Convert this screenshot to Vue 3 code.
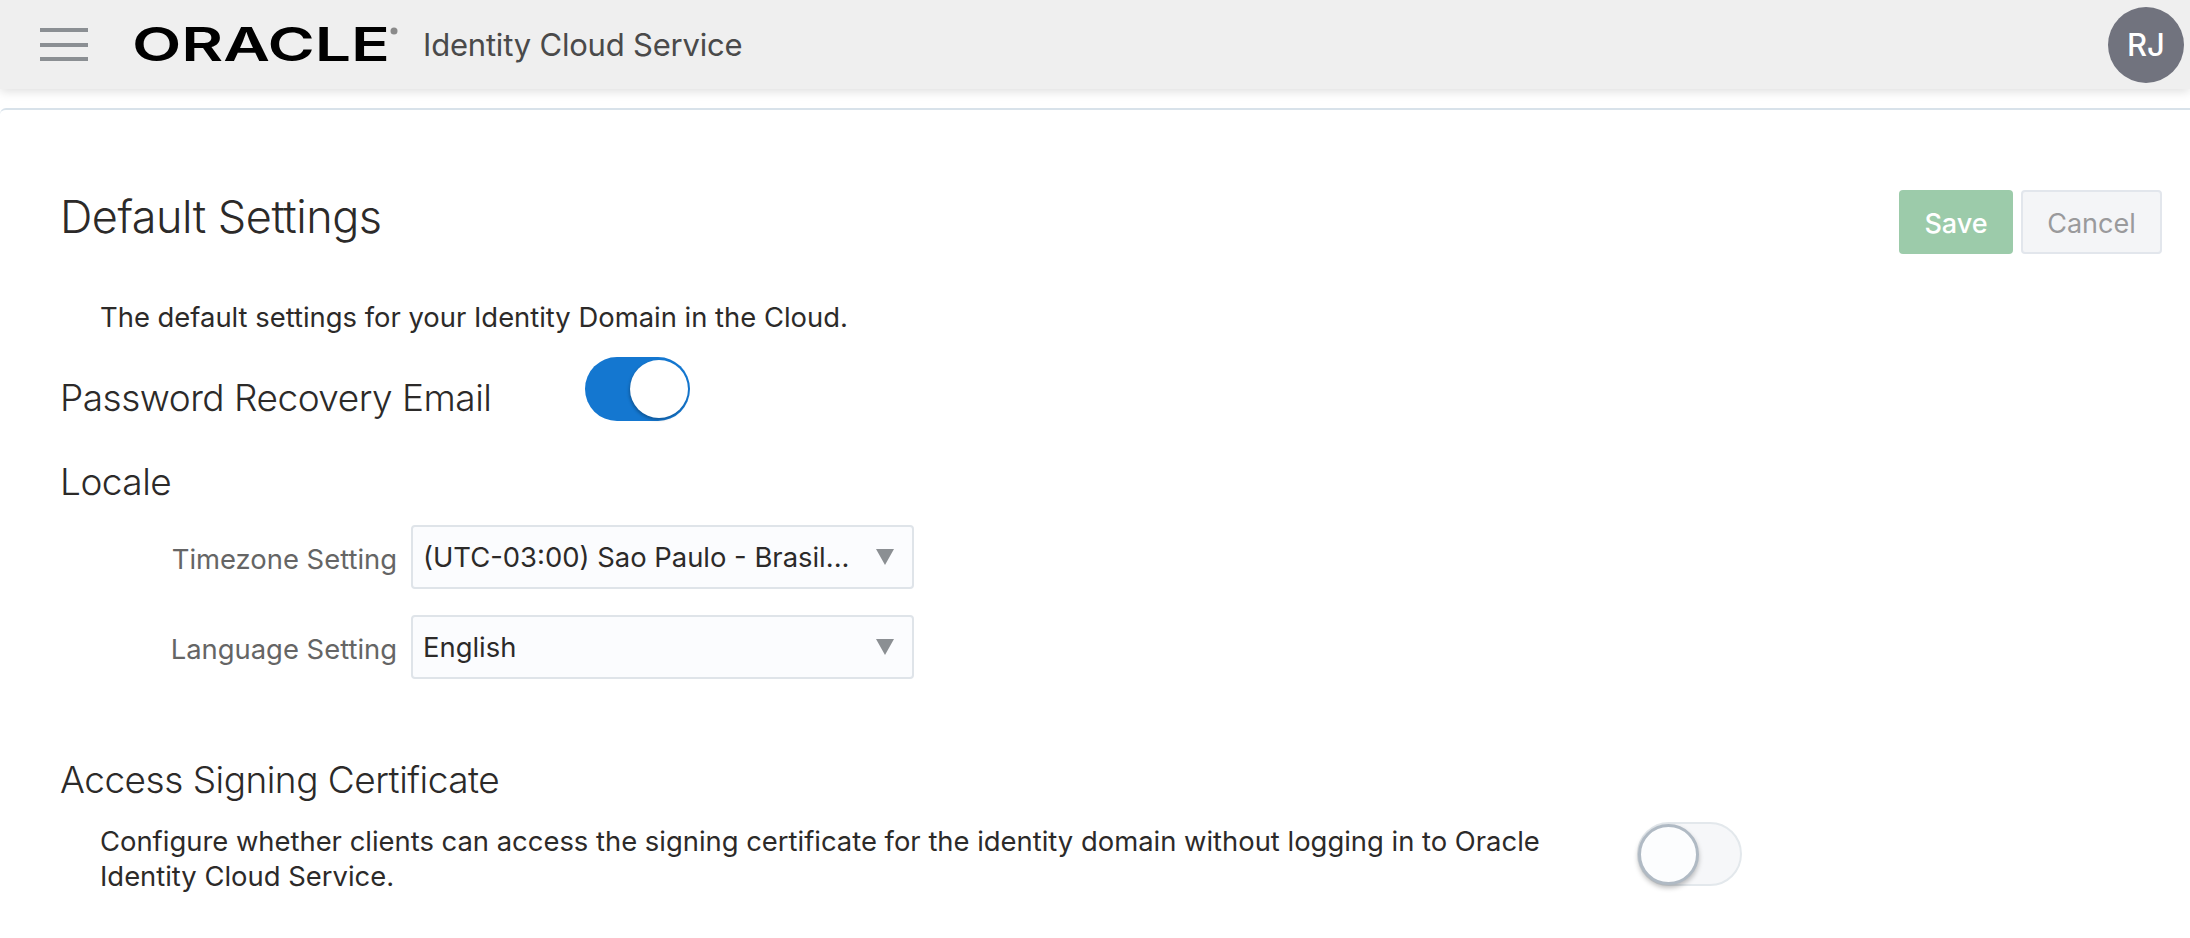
<script setup>
const localeRows = [
  { label: 'Timezone Setting', value: '(UTC-03:00) Sao Paulo - Brasil...' },
  { label: 'Language Setting', value: 'English' }
];
</script>

<template>
  <div class="page">
    <header class="topbar">
      <button class="menu-btn" aria-label="Menu">
        <span></span><span></span><span></span>
      </button>
      <svg class="logo" viewBox="0 0 266 60" width="266" height="60">
        <text x="0" y="47" textLength="258" lengthAdjust="spacingAndGlyphs" class="logo-text">ORACLE</text>
        <circle cx="262" cy="17" r="3.5" fill="#8a8a8a" />
      </svg>
      <span class="product">Identity Cloud Service</span>
      <div class="avatar">RJ</div>
    </header>

    <main class="card">
      <div class="title-row">
        <h1>Default Settings</h1>
        <div class="actions">
          <button class="btn save">Save</button>
          <button class="btn cancel">Cancel</button>
        </div>
      </div>

      <p class="intro">The default settings for your Identity Domain in the Cloud.</p>

      <div class="recovery-row">
        <h2>Password Recovery Email</h2>
        <div class="switch on"><span class="knob"></span></div>
      </div>

      <h2 class="locale-title">Locale</h2>
      <div class="locale-form">
        <div v-for="row in localeRows" :key="row.label" class="form-row">
          <label>{{ row.label }}</label>
          <div class="select">
            <span>{{ row.value }}</span>
            <i class="caret"></i>
          </div>
        </div>
      </div>

      <h2 class="cert-title">Access Signing Certificate</h2>
      <div class="cert-row">
        <p>Configure whether clients can access the signing certificate for the identity domain without logging in to Oracle Identity Cloud Service.</p>
        <div class="switch off"><span class="knob"></span></div>
      </div>
    </main>
  </div>
</template>

<style>
html, body { margin: 0; background: #fff; overflow: hidden; }
</style>

<style scoped>
.page {
  width: 2190px;
  height: 938px;
  overflow: hidden;
  font-family: Inter, "Liberation Sans", sans-serif;
  color: #2c2a29;
  background: #fff;
}

.topbar {
  height: 89px;
  background: #efefef;
  box-shadow: 0 2px 10px rgba(0, 0, 0, 0.14);
  display: flex;
  align-items: center;
  padding: 0 6px 0 40px;
  position: relative;
}
.menu-btn {
  width: 48px;
  height: 33px;
  padding: 0;
  border: 0;
  background: none;
  display: flex;
  flex-direction: column;
  justify-content: space-between;
}
.menu-btn span { display: block; height: 4px; background: #8b8f93; }
.logo { margin-left: 44px; margin-top: -1px; }
.logo-text {
  font-family: Inter, sans-serif;
  font-size: 46px;
  font-weight: 600;
  fill: #000;
}
.product {
  margin-left: 25px;
  font-size: 31px;
  color: #4a4a4a;
  letter-spacing: -0.2px;
}
.avatar {
  margin-left: auto;
  width: 76px;
  height: 76px;
  border-radius: 50%;
  background: #71737e;
  color: #fff;
  font-size: 31px;
  font-weight: 500;
  display: flex;
  align-items: center;
  justify-content: center;
}

.card {
  margin-top: 19px;
  border-top: 2px solid #d8e2ea;
  border-top-left-radius: 6px;
  padding: 80px 28px 0 60px;
}

.title-row {
  display: flex;
  justify-content: space-between;
  align-items: flex-start;
  height: 110px;
}
h1 {
  margin: 0;
  font-size: 45px;
  font-weight: 300;
  line-height: 54px;
  letter-spacing: -0.5px;
}
.actions { display: flex; gap: 8px; }
.btn {
  height: 64px;
  border-radius: 4px;
  font: 500 27px Inter, sans-serif;
  padding: 0;
  padding-top: 2px;
}
.save { width: 114px; background: #9ccbaa; color: #fff; border: 0; }
.cancel { width: 141px; background: #f4f5f7; color: #9a9a9c; border: 2px solid #e2e6ec; font-weight: 400; }

.intro {
  margin: 0 0 0 40px;
  font-size: 27.4px;
  line-height: 34px;
}

h2 {
  margin: 0;
  font-size: 37px;
  font-weight: 300;
  line-height: 44px;
  letter-spacing: -0.5px;
}
.recovery-row {
  display: flex;
  align-items: center;
  margin-top: 22px;
  height: 64px;
}
.recovery-row h2 { width: 525px; padding-top: 20px; }

.switch {
  width: 105px;
  height: 64px;
  border-radius: 32px;
  box-sizing: border-box;
  display: flex;
  align-items: center;
  flex: none;
}
.switch .knob {
  display: block;
  width: 58px;
  height: 58px;
  border-radius: 50%;
  box-sizing: border-box;
  background: #fff;
}
.switch.on { background: #1477d0; justify-content: flex-end; padding-right: 2px; margin-top: 1px; }
.switch.on .knob { box-shadow: -1px 2px 3px rgba(0, 0, 0, 0.25); }
.switch.off { background: #f6f7f9; border: 2px solid #e3e8ec; }
.switch.off .knob {
  width: 61px;
  height: 61px;
  margin-left: -1px;
  background: #fcfdfe;
  border: 3px solid #b0bac4;
  box-shadow: 0 3px 5px rgba(0, 0, 0, 0.25);
}

.locale-title { margin-top: 40px; }
.locale-form {
  margin-top: 21px;
  display: flex;
  flex-direction: column;
  gap: 26px;
}
.form-row { display: flex; align-items: center; gap: 14px; }
.form-row label {
  width: 337px;
  text-align: right;
  font-size: 27.4px;
  color: #656565;
  padding-top: 3px;
}
.select {
  width: 503px;
  height: 64px;
  box-sizing: border-box;
  border: 2px solid #dfe4e9;
  border-radius: 4px;
  background: #fbfcfe;
  display: flex;
  align-items: center;
  justify-content: space-between;
  padding: 0 18px 0 10px;
  font-size: 27.4px;
}
.caret {
  width: 0;
  height: 0;
  border-left: 9px solid transparent;
  border-right: 9px solid transparent;
  border-top: 16px solid #8b8f93;
}

.cert-title { margin-top: 79px; }
.cert-row {
  display: flex;
  align-items: flex-start;
  margin: 22px 0 0 40px;
}
.cert-row p {
  margin: 0 67px 0 0;
  width: 1470px;
  font-size: 27.4px;
  line-height: 35px;
}
.cert-row .switch { margin-top: -2px; }
</style>
